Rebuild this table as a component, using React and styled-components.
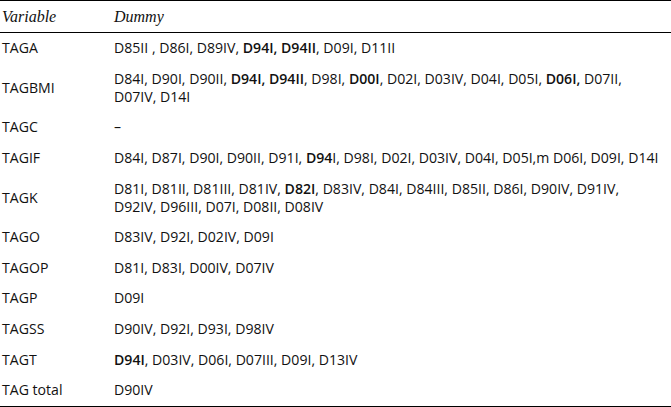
import styled, { createGlobalStyle } from "styled-components";

const GlobalStyle = createGlobalStyle`
  html, body {
    margin: 0;
    padding: 0;
    background: #ffffff;
  }
`;

const Table = styled.table`
  width: 671px;
  border-collapse: collapse;
  border-top: 1px solid #000;
  border-bottom: 1px solid #000;
  font-family: "Open Sans", "Liberation Sans", sans-serif;
  font-size: 14.1px;
  color: #111;
`;

const HeadCell = styled.th`
  text-align: left;
  font-family: "Liberation Serif", serif;
  font-style: italic;
  font-weight: normal;
  font-size: 16px;
  height: 31px;
  padding: 0 0 0 ${(p) => (p.$first ? "2px" : "0")};
  border-bottom: 1px solid #000;
  width: ${(p) => (p.$first ? "112px" : "auto")};
`;

const Cell = styled.td`
  vertical-align: middle;
  white-space: nowrap;
  line-height: 18px;
  padding: 6.3px 0 6.3px ${(p) => (p.$first ? "2px" : "0")};
`;

const B = styled.b`
  font-weight: 600;
`;

const rows = [
  ["TAGA", <>D85II , D86I, D89IV, <B>D94I, D94II</B>, D09I, D11II</>],
  [
    "TAGBMI",
    <>
      D84I, D90I, D90II, <B>D94I, D94II</B>, D98I, <B>D00I</B>, D02I, D03IV,
      D04I, D05I, <B>D06I,</B> D07II,
      <br />
      D07IV, D14I
    </>,
  ],
  ["TAGC", "–"],
  [
    "TAGIF",
    <>
      D84I, D87I, D90I, D90II, D91I, <B>D94</B>I, D98I, D02I, D03IV, D04I,
      D05I,m D06I, D09I, D14I
    </>,
  ],
  [
    "TAGK",
    <>
      D81I, D81II, D81III, D81IV, <B>D82I</B>, D83IV, D84I, D84III, D85II,
      D86I, D90IV, D91IV,
      <br />
      D92IV, D96III, D07I, D08II, D08IV
    </>,
  ],
  ["TAGO", "D83IV, D92I, D02IV, D09I"],
  ["TAGOP", "D81I, D83I, D00IV, D07IV"],
  ["TAGP", "D09I"],
  ["TAGSS", "D90IV, D92I, D93I, D98IV"],
  ["TAGT", <><B>D94I</B>, D03IV, D06I, D07III, D09I, D13IV</>],
  ["TAG total", "D90IV"],
];

export default function App() {
  return (
    <>
      <GlobalStyle />
      <Table>
        <thead>
          <tr>
            <HeadCell $first>Variable</HeadCell>
            <HeadCell>Dummy</HeadCell>
          </tr>
        </thead>
        <tbody>
          {rows.map(([name, dummy]) => (
            <tr key={name}>
              <Cell $first>{name}</Cell>
              <Cell>{dummy}</Cell>
            </tr>
          ))}
        </tbody>
      </Table>
    </>
  );
}
